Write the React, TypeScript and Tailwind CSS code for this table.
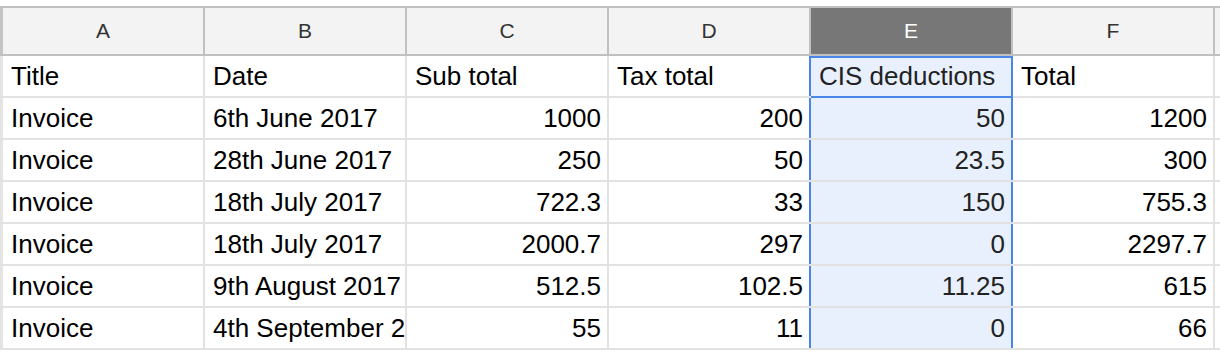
const columns = ["A", "B", "C", "D", "E", "F"];

const rows: string[][] = [
  ["Title", "Date", "Sub total", "Tax total", "CIS deductions", "Total"],
  ["Invoice", "6th June 2017", "1000", "200", "50", "1200"],
  ["Invoice", "28th June 2017", "250", "50", "23.5", "300"],
  ["Invoice", "18th July 2017", "722.3", "33", "150", "755.3"],
  ["Invoice", "18th July 2017", "2000.7", "297", "0", "2297.7"],
  ["Invoice", "9th August 2017", "512.5", "102.5", "11.25", "615"],
  ["Invoice", "4th September 2017", "55", "11", "0", "66"],
];

function HeaderRow() {
  return (
    <div className="flex h-[48px] border-b-2 border-[#c0c0c0] bg-[#f3f3f3]">
      <div className="w-[3px] shrink-0 bg-[#c4c4c4]" />
      {columns.map((c) =>
        c === "E" ? (
          <div
            key={c}
            className="w-[202px] shrink-0 border-r-2 border-[#c0c0c0] bg-[#777777] flex items-center justify-center text-[21px] text-white"
          >
            {c}
          </div>
        ) : (
          <div
            key={c}
            className="w-[202px] shrink-0 border-r-2 border-[#c0c0c0] flex items-center justify-center text-[21px] text-[#333333]"
          >
            {c}
          </div>
        )
      )}
      <div className="flex-1" />
    </div>
  );
}

function Cell({ value, col, row }: { value: string; col: number; row: number }) {
  const numeric = row > 0 && col >= 2;
  const selected = col === 4;
  const beforeSelected = col === 3;
  const active = selected && row === 0;

  let cls =
    "w-[202px] shrink-0 border-r-2 flex items-center overflow-hidden whitespace-nowrap text-[26px] ";
  cls += numeric ? "justify-end pr-[6px] " : "pl-[8px] ";
  if (selected) {
    cls += "bg-[#e8f0fe] border-[#4a86e8] text-[#222222] ";
  } else if (beforeSelected) {
    cls += "border-[#4a86e8] text-black ";
  } else {
    cls += "border-[#e2e2e2] text-black ";
  }
  if (active) {
    cls += "shadow-[inset_0_2px_0_#4a86e8,0_2px_0_#4a86e8] relative ";
  }
  return <div className={cls}>{value}</div>;
}

function Row({ cells, index }: { cells: string[]; index: number }) {
  return (
    <div className="flex h-[42px] border-b-2 border-[#e2e2e2]">
      <div className="w-[3px] shrink-0 bg-[#e4e4e4]" />
      {cells.map((v, i) => (
        <Cell key={i} value={v} col={i} row={index} />
      ))}
      <div className="flex-1" />
    </div>
  );
}

export default function App() {
  return (
    <div
      className="w-[1220px] h-[352px] overflow-hidden bg-white pt-[6px]"
      style={{ fontFamily: '"Liberation Sans", Arial, sans-serif' }}
    >
      <div className="border-t-2 border-[#c0c0c0]">
        <HeaderRow />
        {rows.map((r, i) => (
          <Row key={i} cells={r} index={i} />
        ))}
      </div>
    </div>
  );
}
